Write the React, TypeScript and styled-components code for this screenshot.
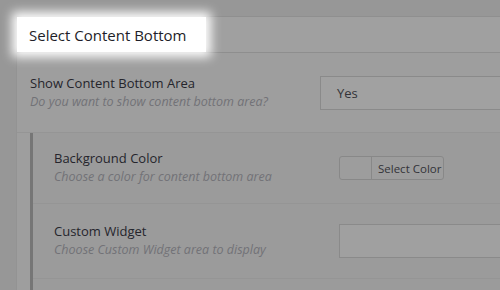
import React from "react";
import styled, { createGlobalStyle } from "styled-components";

const Global = createGlobalStyle`
  html, body { margin: 0; padding: 0; }
  body {
    background: #979797;
    font-family: "Open Sans", "Liberation Sans", sans-serif;
    overflow: hidden;
  }
`;

const Page = styled.div`
  width: 500px;
  height: 290px;
  padding: 16px 0 0 16px;
  box-sizing: border-box;
  overflow: hidden;
`;

const Panel = styled.div`
  background: #a0a0a0;
  border-top: 1px solid #8f8f8f;
  border-left: 1px solid #939393;
  height: 100%;
  box-sizing: border-box;
`;

const Header = styled.div`
  height: 35px;
  border-bottom: 1px solid #8e8e8e;
  display: flex;
`;

const Spotlight = styled.div`
  width: 189px;
  height: 35px;
  background: #ffffff;
  box-shadow: 0 0 10px 5px #ffffff;
  display: flex;
  align-items: center;
  padding-left: 12px;
  box-sizing: border-box;
  position: relative;
  z-index: 1;
`;

const Title = styled.span`
  font-size: 15px;
  color: #1e1e28;
`;

const Body = styled.div`
  background: #9e9e9e;
  height: 100%;
`;

const Row = styled.div<{ $h: number; $pl: number; $gap: number }>`
  height: ${(p) => p.$h}px;
  display: grid;
  grid-template-columns: ${(p) => p.$gap}px 1fr;
  padding-left: ${(p) => p.$pl}px;
  align-items: center;
  box-sizing: border-box;
  border-bottom: 1px solid #959595;
`;

const LabelCol = styled.div`
  display: flex;
  flex-direction: column;
  white-space: nowrap;
`;

const Label = styled.div`
  font-size: 13px;
  line-height: 18px;
  color: #25252c;
`;

const Desc = styled.div`
  font-size: 12.5px;
  line-height: 20px;
  font-style: italic;
  color: #727277;
`;

const Nested = styled.div`
  margin-left: 13px;
  border-left: 3px solid #767676;
  background: #9b9b9b;
`;

const SelectBox = styled.div`
  height: 34px;
  border: 1px solid #8a8a8a;
  border-right: none;
  background: #a1a1a1;
  display: flex;
  align-items: center;
  padding-left: 16px;
  font-size: 13px;
  color: #333338;
  box-sizing: border-box;
`;

const ColorButton = styled.div`
  width: 105px;
  height: 24px;
  border: 1px solid #888;
  border-radius: 3px;
  display: flex;
  box-sizing: border-box;
  background: #9d9d9d;
`;

const Swatch = styled.div`
  width: 31px;
  flex: none;
  border-right: 1px solid #888;
`;

const ColorLabel = styled.div`
  flex: 1;
  display: flex;
  align-items: center;
  padding-left: 6px;
  font-size: 11.5px;
  white-space: nowrap;
  color: #333338;
`;

const Input = styled.div`
  height: 34px;
  border: 1px solid #8a8a8a;
  border-right: none;
  background: #a0a0a0;
  box-sizing: border-box;
`;

export default function App() {
  return (
    <>
      <Global />
      <Page>
        <Panel>
          <Header>
            <Spotlight>
              <Title>Select Content Bottom</Title>
            </Spotlight>
          </Header>
          <Body>
            <Row $h={80} $pl={13} $gap={290}>
              <LabelCol>
                <Label>Show Content Bottom Area</Label>
                <Desc>Do you want to show content bottom area?</Desc>
              </LabelCol>
              <SelectBox>Yes</SelectBox>
            </Row>
            <Nested>
              <Row $h={71} $pl={21} $gap={285}>
                <LabelCol>
                  <Label>Background Color</Label>
                  <Desc>Choose a color for content bottom area</Desc>
                </LabelCol>
                <ColorButton>
                  <Swatch />
                  <ColorLabel>Select Color</ColorLabel>
                </ColorButton>
              </Row>
              <Row $h={75} $pl={21} $gap={285}>
                <LabelCol>
                  <Label>Custom Widget</Label>
                  <Desc>Choose Custom Widget area to display</Desc>
                </LabelCol>
                <Input />
              </Row>
              <Row $h={20} $pl={21} $gap={285} />
            </Nested>
          </Body>
        </Panel>
      </Page>
    </>
  );
}
